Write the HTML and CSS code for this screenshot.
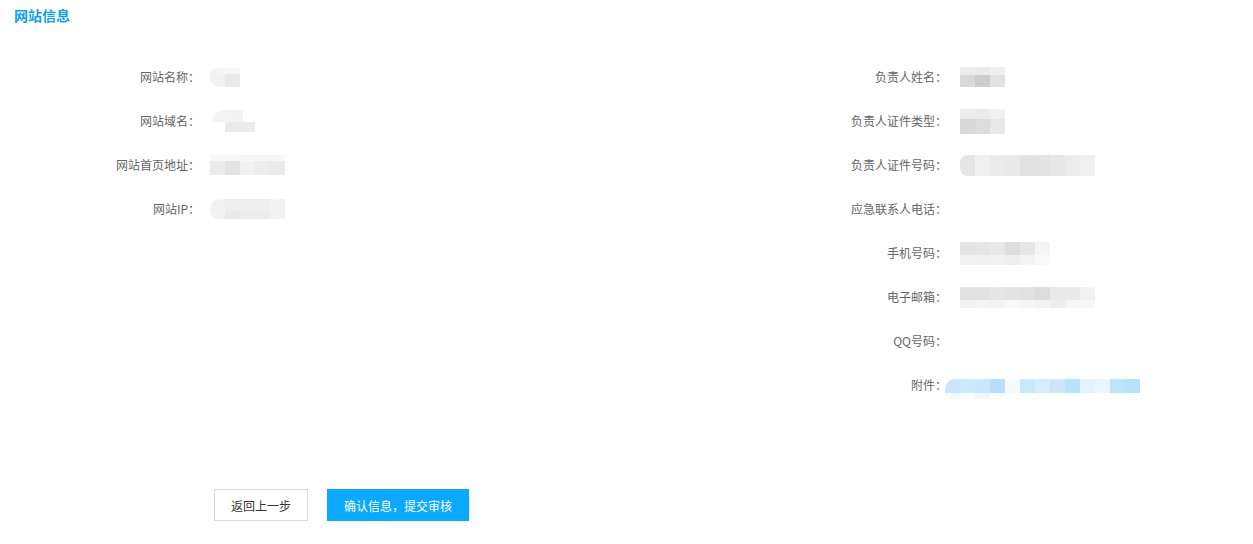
FILE: index.html
```html
<!DOCTYPE html>
<html lang="zh-CN">
<head>
<meta charset="utf-8">
<title>网站信息</title>
<link rel="stylesheet" href="styles.css">
</head>
<body>
<div class="title">网站信息</div>
<div class="form">
  <div class="col col-left">
    <div class="row"><div class="label">网站名称：</div><div class="value"><div class="px" data-block="name"></div></div></div>
    <div class="row"><div class="label">网站域名：</div><div class="value"><div class="px" data-block="domain"></div></div></div>
    <div class="row"><div class="label">网站首页地址：</div><div class="value"><div class="px" data-block="home"></div></div></div>
    <div class="row"><div class="label">网站IP：</div><div class="value"><div class="px" data-block="ip"></div></div></div>
  </div>
  <div class="col col-right">
    <div class="row"><div class="label">负责人姓名：</div><div class="value"><div class="px" data-block="owner"></div></div></div>
    <div class="row"><div class="label">负责人证件类型：</div><div class="value"><div class="px" data-block="idtype"></div></div></div>
    <div class="row"><div class="label">负责人证件号码：</div><div class="value"><div class="px" data-block="idno"></div></div></div>
    <div class="row"><div class="label">应急联系人电话：</div><div class="value"></div></div>
    <div class="row"><div class="label">手机号码：</div><div class="value"><div class="px" data-block="mobile"></div></div></div>
    <div class="row"><div class="label">电子邮箱：</div><div class="value"><div class="px" data-block="email"></div></div></div>
    <div class="row"><div class="label">QQ号码：</div><div class="value"></div></div>
    <div class="row"><div class="label">附件：</div><div class="value value-attach"><div class="px" data-block="attach"></div></div></div>
  </div>
</div>
<div class="actions">
  <button class="btn btn-back" type="button">返回上一步</button>
  <button class="btn btn-primary" type="button">确认信息，提交审核</button>
</div>
<script src="script.js"></script>
</body>
</html>
```

FILE: styles.css
```css
* { box-sizing: border-box; }
body {
  margin: 0;
  background: #fff;
  font-family: "Microsoft YaHei", "Noto Sans CJK SC", "Liberation Sans", sans-serif;
  font-size: 12px;
  color: #666;
}
.title {
  padding: 6px 14px 0;
  height: 30px;
  font-size: 14px;
  line-height: 18px;
  font-weight: bold;
  color: #0ba1ec;
}
.form {
  display: flex;
  margin-top: 25px;
}
.col { display: flex; flex-direction: column; }
.col-left { width: 795px; }
.row {
  display: flex;
  align-items: center;
  height: 44px;
}
.label {
  text-align: right;
  line-height: 16px;
  white-space: nowrap;
  color: #666;
}
.col-left .label { width: 200px; margin-right: 10px; }
.col-right .label { width: 152px; margin-right: 13px; }
.value { display: flex; align-items: center; }
.value-attach { margin-left: -15px; margin-top: 8px; }
.px { display: flex; flex-direction: column; }
.pxr { display: flex; }
.pxc { width: 15px; flex: none; }
.actions {
  display: flex;
  gap: 19px;
  padding-left: 214px;
  margin-top: 82px;
}
.btn {
  height: 32px;
  font-family: inherit;
  font-size: 12px;
  border-radius: 0;
  cursor: pointer;
  padding: 0;
}
.btn-back {
  width: 94px;
  background: #fff;
  border: 1px solid #d9d9d9;
  color: #333;
}
.btn-primary {
  width: 142px;
  background: #08a9fe;
  border: 1px solid #08a9fe;
  color: #fff;
}
```

FILE: script.js
```js
var blocks = {
  name: { rows: [
    { h: 6, off: 0, r: 'tl', c: ['#f4f4f4', '#f6f6f6'] },
    { h: 13, off: 0, r: 'bl', c: ['#f1f1f1', '#e9e9eb'] }
  ] },
  domain: { rows: [
    { h: 12, off: 3, r: 'tl', c: ['#f4f3f2', '#f2f2f4'] },
    { h: 10, off: 15, r: '', c: ['#e9eaea', '#ebebeb'] }
  ] },
  home: { rows: [
    { h: 6, off: 0, r: '', c: ['#f8f8f8', '#f8f8f8', '#f6f6f6', '#f6f6f6', '#f6f6f6'] },
    { h: 14, off: 0, r: '', c: ['#ebebeb', '#e3e3e3', '#f1f1f1', '#ececec', '#eaeaea'] }
  ] },
  ip: { rows: [
    { h: 12, off: 0, r: 'tl', c: ['#f1f1f1', '#eeeeee', '#eeeeee', '#eeeeee', '#f2f2f2'] },
    { h: 8, off: 0, r: 'bl', c: ['#f1f1f1', '#e9e9e9', '#ececec', '#ececec', '#f2f2f2'] }
  ] },
  owner: { rows: [
    { h: 8, off: 0, r: '', c: ['#ececec', '#eaeaea', '#efefef'] },
    { h: 12, off: 0, r: '', c: ['#d9d9d9', '#cccccc', '#e2e2e2'] }
  ] },
  idtype: { rows: [
    { h: 10, off: 0, r: '', c: ['#ececec', '#ebebeb', '#f1f1f1'] },
    { h: 15, off: 0, r: '', c: ['#d9d9d9', '#dcdcdc', '#e8e8e8'] }
  ] },
  idno: { rows: [
    { h: 21, off: 0, r: 'l', c: ['#e5e5e5', '#f0f0f0', '#ebebeb', '#e9e9e9', '#e2e2e2', '#e3e3e3', '#e7e7e7', '#ececec', '#efefef'] }
  ] },
  mobile: { rows: [
    { h: 13, off: 0, r: '', c: ['#e4e4e4', '#e4e5e5', '#e8e8e8', '#dedede', '#e6e6e6', '#f4f4f4'] },
    { h: 10, off: 0, r: '', c: ['#f1f1f1', '#f0f0f0', '#f1f1f1', '#eeeeee', '#f3f3f3', '#f8f8f8'] }
  ] },
  email: { rows: [
    { h: 13, off: 0, r: '', c: ['#e1e1e1', '#e2e2e2', '#e6e6e6', '#e3e3e3', '#e1e1e1', '#dcdcdc', '#e9e9ec', '#e9e9e9', '#f1f1f1'] },
    { h: 8, off: 0, r: '', c: ['#f2f2f2', '#f4f4f4', '#f3f3f3', '#f8f8f8', '#f5f5f5', '#f2f2f2', '#ededef', '#f6f6f6', '#f7f7f7'] }
  ] },
  attach: { rows: [
    { h: 14, off: 0, r: 'tl', c: ['#c8e6fd', '#cde9fd', '#c8e7fd', '#b4dffd', '#f4fbff', '#c9e7fd', '#d7edfd', '#c9e6fd', '#b9e2fe', '#e2f3ff', '#e9f5ff', '#bfe3fd', '#b8e1fd'] },
    { h: 6, off: 0, r: 'bl', c: ['#f2f9ff', '#f8fcff', '#eef7ff', '#fafdff', '#ffffff', '#ffffff', '#fbfdff', '#ffffff', '#ffffff', '#ffffff', '#ffffff', '#ffffff', '#ffffff'] }
  ] }
};

document.querySelectorAll('.px').forEach(function (el) {
  var b = blocks[el.getAttribute('data-block')];
  if (!b) return;
  b.rows.forEach(function (row) {
    var r = document.createElement('div');
    r.className = 'pxr';
    r.style.marginLeft = row.off + 'px';
    row.c.forEach(function (col, i) {
      var c = document.createElement('div');
      c.className = 'pxc';
      c.style.height = row.h + 'px';
      c.style.background = col;
      if (i === 0 && row.r) {
        if (row.r === 'tl') c.style.borderTopLeftRadius = '10px';
        if (row.r === 'bl') c.style.borderBottomLeftRadius = '10px';
        if (row.r === 'l') { c.style.borderTopLeftRadius = '8px'; c.style.borderBottomLeftRadius = '8px'; }
      }
      r.appendChild(c);
    });
    el.appendChild(r);
  });
});
```
